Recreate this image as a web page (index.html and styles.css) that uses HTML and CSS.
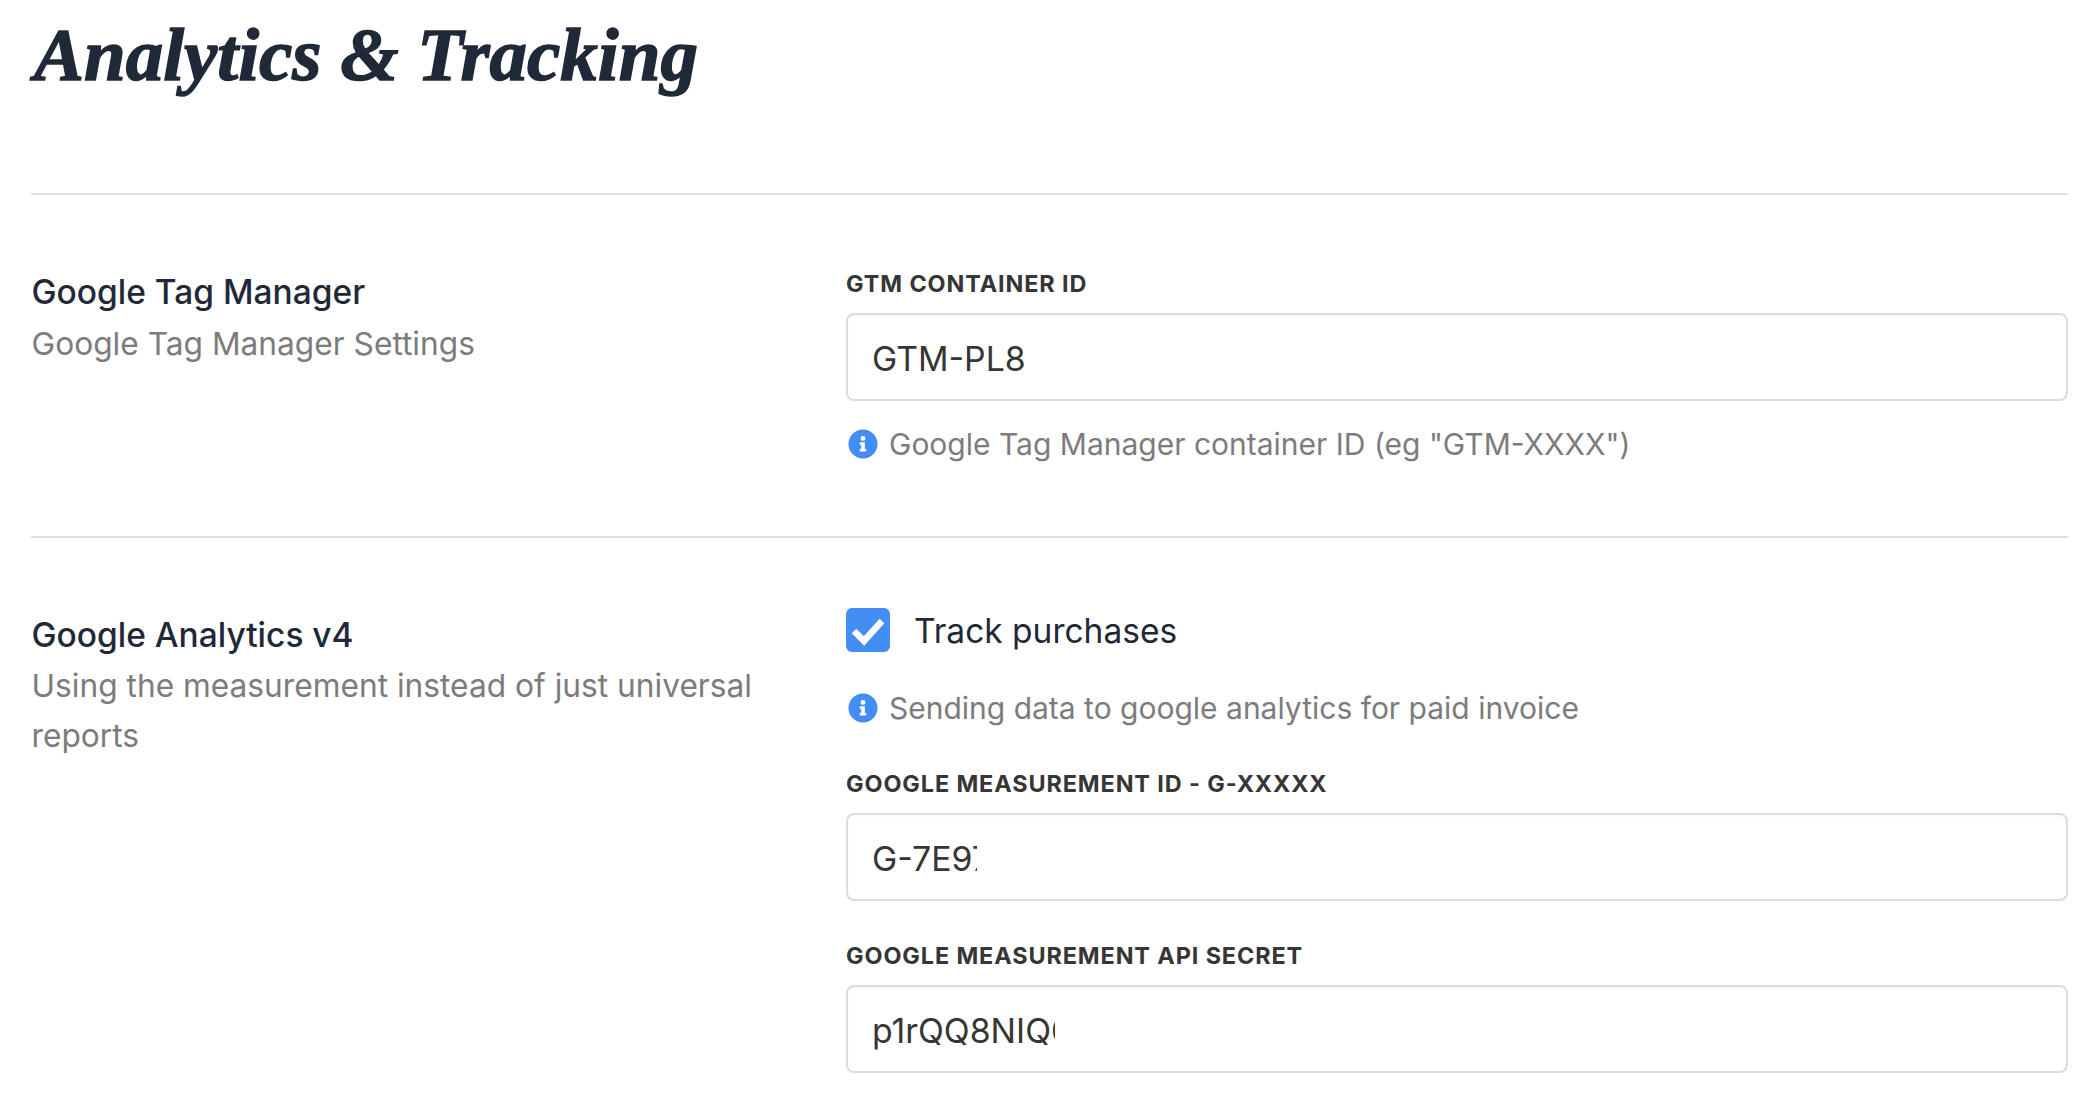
FILE: index.html
```html
<!DOCTYPE html>
<html lang="en">
<head>
<meta charset="utf-8">
<title>Analytics &amp; Tracking</title>
<link rel="stylesheet" href="styles.css">
</head>
<body>
<main class="page">
  <h1 class="title">Analytics &amp; Tracking</h1>
  <section class="row row-first">
    <div class="intro">
      <h2 class="intro-title">Google Tag Manager</h2>
      <p class="intro-text">Google Tag Manager Settings</p>
    </div>
    <div class="fields">
      <div class="field">
        <label class="label">GTM CONTAINER ID</label>
        <div class="input"><span class="value">GTM-PL8</span></div>
        <p class="hint"><svg class="info" viewBox="0 0 512 512"><path fill-rule="evenodd" d="M256 8a248 248 0 1 0 0 496 248 248 0 0 0 0-496zm0 110a42 42 0 1 1 0 84 42 42 0 0 1 0-84zm56 254c0 7-5 12-12 12h-88c-7 0-12-5-12-12v-24c0-7 5-12 12-12h12v-64h-12c-7 0-12-5-12-12v-24c0-7 5-12 12-12h64c7 0 12 5 12 12v100h12c7 0 12 5 12 12z"/></svg>Google Tag Manager container ID (eg "GTM-XXXX")</p>
      </div>
    </div>
  </section>
  <section class="row row-second">
    <div class="intro intro-second">
      <h2 class="intro-title">Google Analytics v4</h2>
      <p class="intro-text">Using the measurement instead of just universal reports</p>
    </div>
    <div class="fields">
      <div class="check-row">
        <span class="check"><svg viewBox="0 0 44 44"><path d="M8 23l10 10L36 13" fill="none" stroke="#fff" stroke-width="6.5"/></svg></span>
        <span class="check-label">Track purchases</span>
      </div>
      <p class="hint hint-check"><svg class="info" viewBox="0 0 512 512"><path fill-rule="evenodd" d="M256 8a248 248 0 1 0 0 496 248 248 0 0 0 0-496zm0 110a42 42 0 1 1 0 84 42 42 0 0 1 0-84zm56 254c0 7-5 12-12 12h-88c-7 0-12-5-12-12v-24c0-7 5-12 12-12h12v-64h-12c-7 0-12-5-12-12v-24c0-7 5-12 12-12h64c7 0 12 5 12 12v100h12c7 0 12 5 12 12z"/></svg>Sending data to google analytics for paid invoice</p>
      <div class="field field-gap">
        <label class="label">GOOGLE MEASUREMENT ID - G-XXXXX</label>
        <div class="input"><span class="value clip-id">G-7E97</span></div>
      </div>
      <div class="field field-gap2">
        <label class="label">GOOGLE MEASUREMENT API SECRET</label>
        <div class="input"><span class="value clip-secret">p1rQQ8NIQ0</span></div>
      </div>
    </div>
  </section>
</main>
</body>
</html>
```
FILE: styles.css
```css
* { box-sizing: border-box; }
html, body { margin: 0; padding: 0; background: #fff; }
body { font-family: Inter, "Liberation Sans", sans-serif; overflow: hidden; height: 1109px; }
.page { padding: 0 21px 0 31px; }
.title {
  margin: 0;
  height: 193px;
  padding: 17px 0 0 3px;
  font-family: "Liberation Serif", serif;
  font-style: italic;
  font-weight: 700;
  font-size: 75px;
  line-height: 76px;
  letter-spacing: 0;
  -webkit-text-stroke: 1.5px #1f2937;
  color: #1f2937;
}
.row { display: grid; grid-template-columns: 815px 1fr; border-top: 2px solid #e0e0e0; }
.row-first { height: 343px; padding-top: 71px; }
.row-second { padding-top: 70px; }
.intro { padding-left: 0.5px; }
.intro-second { padding-top: 1px; }
.intro-title { margin: 0; font-size: 33.5px; font-weight: 500; line-height: 52px; color: #1f2937; }
.intro-text { margin: 0; width: 740px; font-size: 31.7px; font-weight: 400; line-height: 50px; color: #7c7c7c; }
.row-first .intro-text { padding-top: 1px; }
.row-first .fields { padding-top: 1px; }
.label { display: block; font-size: 23.4px; font-weight: 700; letter-spacing: 0.9px; line-height: 32px; color: #363636; }
.input {
  display: flex; align-items: center;
  height: 88px; margin-top: 13px; padding: 3px 24px 0;
  border: 2px solid #dcdcdc; border-radius: 8px;
  font-size: 33.8px; color: #363636;
  box-shadow: inset 0 1px 3px rgba(0,0,0,.04);
}
.value { white-space: nowrap; overflow: hidden; }
.clip-id { width: 105px; }
.clip-secret { width: 183px; }
.field { padding-top: 1px; }
.hint { display: flex; align-items: center; gap: 11px; margin: 20.5px 0 0 2px; font-size: 30px; line-height: 44px; color: #7c7c7c; }
.info { width: 30px; height: 30px; fill: #428ef5; flex: none; }
.check-row { display: flex; align-items: center; gap: 24px; height: 44px; }
.check { display: block; width: 44px; height: 44px; border-radius: 6px; background: #428ef5; }
.check svg { display: block; width: 44px; height: 44px; }
.check-label { font-size: 33.5px; color: #1f2937; padding-top: 1px; }
.hint-check { margin-top: 33.5px; }
.field-gap { margin-top: 37.5px; }
.field-gap2 { margin-top: 37.5px; }
```
